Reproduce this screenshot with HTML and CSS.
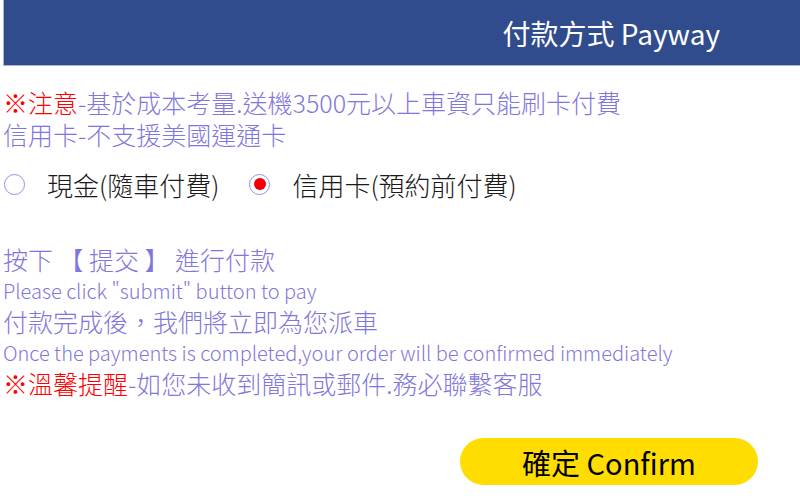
FILE: index.html
```html
<!DOCTYPE html>
<html lang="zh-Hant">
<head>
    <meta charset="UTF-8">
    <meta name="viewport" content="width=device-width, initial-scale=1.0">
    <title>付款方式 Payway</title>
    <link rel="stylesheet" href="styles.css">
</head>
<body>
    <div class="header">
        <h2>付款方式 Payway</h2>
    </div>

    <div class="notice">
        <p><span class="red">※注意</span>-基於成本考量.送機3500元以上車資只能刷卡付費</p>
        <p>信用卡-不支援美國運通卡</p>
    </div>

    <form id="payForm">
        <div class="payway">
            <label class="option">
                <input type="radio" name="payway" value="cash">
                <span>現金(隨車付費)</span>
            </label>
            <label class="option">
                <input type="radio" name="payway" value="card" checked>
                <span>信用卡(預約前付費)</span>
            </label>
        </div>

        <div class="info">
            <p class="big">按下 【 提交 】 進行付款</p>
            <p class="small">Please click "submit" button to pay</p>
            <p class="big">付款完成後，我們將立即為您派車</p>
            <p class="small">Once the payments is completed,your order will be confirmed immediately</p>
            <p class="big"><span class="red">※溫馨提醒</span>-如您未收到簡訊或郵件.務必聯繫客服</p>
        </div>

        <div class="actions">
            <button type="button" class="confirm">確定 Confirm</button>
        </div>
    </form>
</body>
</html>
```

FILE: styles.css
```css
body {
    font-family: "Noto Sans CJK TC", "Noto Sans", sans-serif;
    margin: 0;
    background: #fff;
}
p {
    margin: 0;
}
.header {
    margin-left: 3px;
    height: 65px;
    background-color: #304c8c;
    border-left: 1px solid #aab6d8;
    border-bottom: 1px solid #aab6d8;
    display: flex;
    align-items: center;
    justify-content: flex-end;
    padding-right: 80px;
}
.header h2 {
    margin: 0;
    color: #fff;
    font-size: 28px;
    font-weight: normal;
}
.notice {
    margin-top: 20px;
    padding-left: 3px;
    color: #7f77dc;
    font-size: 25px;
    font-weight: 300;
    line-height: 32px;
}
.red {
    color: #ff0000;
}
.payway {
    margin-top: 16px;
    padding-left: 4px;
    display: flex;
    align-items: center;
    gap: 30px;
    height: 36px;
}
.option {
    display: flex;
    align-items: center;
    gap: 22px;
    font-size: 26px;
    font-weight: 300;
    color: #1a1a1a;
}
.option input {
    appearance: none;
    box-sizing: border-box;
    flex-shrink: 0;
    margin: 0;
    width: 21px;
    height: 21px;
    border: 1px solid #9a8fe2;
    border-radius: 50%;
    background: #fff;
    display: grid;
    place-items: center;
}
.option input:checked::before {
    content: "";
    width: 12px;
    height: 12px;
    border-radius: 50%;
    background: #f00000;
}
.info {
    margin-top: 42px;
    padding-left: 3px;
    color: #7f77dc;
    font-weight: 300;
    line-height: 31px;
}
.info .big {
    font-size: 25px;
}
.info .small {
    font-size: 20px;
}
.actions {
    display: flex;
    justify-content: flex-end;
    padding-right: 42px;
    margin-top: 39px;
}
.confirm {
    width: 298px;
    height: 47px;
    border: none;
    border-radius: 24px;
    background-color: #ffdd00;
    color: #000;
    font-family: inherit;
    font-size: 29px;
    cursor: pointer;
}
```
